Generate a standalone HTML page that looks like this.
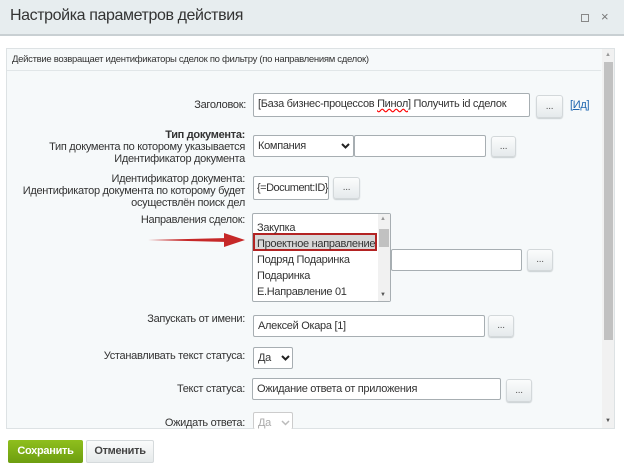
<!DOCTYPE html><html><head><meta charset="utf-8"><style>
body{margin:0;width:624px;height:470px;background:#fff;font-family:"Liberation Sans",sans-serif;position:relative;overflow:hidden;color:#333;letter-spacing:-0.3px}
.a{position:absolute}
.l{position:absolute;font-size:11px;text-align:right;line-height:12px;color:#333}
.in{position:absolute;background:#fff;border:1px solid #a7aeb2;border-radius:2px;font-size:11px;line-height:20px;padding-left:4px;box-sizing:border-box;color:#333;white-space:nowrap;overflow:hidden}
.b{position:absolute;background:linear-gradient(#fbfcfc,#e5eaec);border:1px solid #d3d8da;border-radius:3px;box-sizing:border-box;font-size:10px;text-align:center;line-height:16px;color:#555;box-shadow:0 1px 1px #c9cfd1}
.ch{position:absolute;top:7px}
</style></head><body>
<div class="a" style="left:0;top:0;width:624px;height:34px;background:#e7edef;border-bottom:2px solid #c9d0d3"></div>
<div class="a" style="left:10px;top:7px;font-size:16px;color:#333;letter-spacing:-0.4px">Настройка параметров действия</div>
<div class="a" style="left:581px;top:14px;width:6px;height:6px;border:1px solid #888"></div>
<div class="a" style="left:601px;top:9px;font-size:13px;color:#777">×</div>
<div class="a" style="left:6px;top:48px;width:609px;height:381px;border:1px solid #dde2e4;background:#f6f9fa;box-sizing:border-box"></div>
<div class="a" style="left:7px;top:49px;width:594px;height:21px;border-bottom:1px solid #e1e6e8;background:#f6f9fa"></div>
<div class="a" style="left:12px;top:54px;font-size:9.5px;color:#333">Действие возвращает идентификаторы сделок по фильтру (по направлениям сделок)</div>
<div class="a" style="left:602px;top:49px;width:12px;height:379px;background:#f1f1f1"></div>
<div class="a" style="left:604px;top:62px;width:9px;height:278px;background:#c1c1c1"></div>
<div class="a" style="left:605px;top:52px;font-size:6px;color:#999">▲</div>
<div class="a" style="left:605px;top:418px;font-size:6px;color:#555">▼</div>

<div class="l" style="right:378px;top:99px">Заголовок:</div>
<div class="in" style="left:253px;top:93px;width:277px;height:24px">[База бизнес-процессов <span style="text-decoration:underline wavy red">Пинол</span>] Получить id сделок</div>
<div class="b" style="left:536px;top:95px;width:27px;height:23px;line-height:21px">...</div>
<div class="a" style="left:570px;top:99px;font-size:11px;color:#2067b0">[<u>Ид</u>]</div>

<div class="l" style="right:379px;top:129px"><b>Тип документа:</b><br>Тип документа по которому указывается<br>Идентификатор документа</div>
<div class="in" style="left:253px;top:135px;width:101px;height:22px;line-height:20px">Компания<svg class="ch" style="left:87px" width="9" height="6"><path d="M1 1 L4.5 4.5 L8 1" stroke="#222" stroke-width="2" fill="none"/></svg></div>
<div class="in" style="left:354px;top:135px;width:132px;height:22px"></div>
<div class="b" style="left:491px;top:136px;width:25px;height:21px;line-height:19px">...</div>

<div class="l" style="right:379px;top:173px">Идентификатор документа:<br>Идентификатор документа по которому будет<br>осуществлён поиск дел</div>
<div class="in" style="left:253px;top:176px;width:76px;height:24px;line-height:22px;padding-left:3px;letter-spacing:-0.5px">{=Document:ID}</div>
<div class="b" style="left:333px;top:177px;width:27px;height:22px;line-height:20px">...</div>

<div class="l" style="right:379px;top:214px">Направления сделок:</div>
<div class="a" style="left:252px;top:213px;width:139px;height:89px;background:#fff;border:1px solid #a7aeb2;border-radius:2px;box-sizing:border-box"></div>
<div class="a" style="left:378px;top:214px;width:12px;height:87px;background:#f1f1f1"></div>
<div class="a" style="left:379px;top:229px;width:10px;height:18px;background:#c1c1c1"></div>
<div class="a" style="left:380px;top:216px;font-size:6px;color:#999">▲</div>
<div class="a" style="left:380px;top:292px;font-size:6px;color:#555">▼</div>
<div class="a" style="left:253px;top:233px;width:124px;height:18px;background:#d8d8d8;border:2px solid #b32323;box-sizing:border-box"></div>
<div class="a" style="left:257px;top:220px;font-size:11px;line-height:16px;color:#333">Закупка<br>Проектное направление<br>Подряд Подаринка<br>Подаринка<br>Е.Направление 01</div>
<svg class="a" style="left:148px;top:232px" width="98" height="16"><path d="M0 8 L80 6 L80 10 Z" fill="#c62828"/><path d="M76 1 L97 8 L76 15 Z" fill="#c62828"/></svg>
<div class="in" style="left:391px;top:249px;width:131px;height:22px"></div>
<div class="b" style="left:527px;top:249px;width:26px;height:22px;line-height:20px">...</div>

<div class="l" style="right:379px;top:313px">Запускать от имени:</div>
<div class="in" style="left:253px;top:315px;width:232px;height:22px">Алексей Окара [1]</div>
<div class="b" style="left:488px;top:315px;width:26px;height:22px;line-height:20px">...</div>

<div class="l" style="right:379px;top:350px">Устанавливать текст статуса:</div>
<div class="in" style="left:253px;top:347px;width:40px;height:22px">Да<svg class="ch" style="left:27px" width="9" height="6"><path d="M1 1 L4.5 4.5 L8 1" stroke="#222" stroke-width="2" fill="none"/></svg></div>

<div class="l" style="right:379px;top:383px">Текст статуса:</div>
<div class="in" style="left:252px;top:378px;width:249px;height:22px">Ожидание ответа от приложения</div>
<div class="b" style="left:506px;top:379px;width:26px;height:23px;line-height:21px">...</div>

<div class="l" style="right:379px;top:417px">Ожидать ответа:</div>
<div class="in" style="left:253px;top:412px;width:40px;height:17px;color:#aaa;border-color:#ccc;border-bottom:none">Да<svg class="ch" style="left:27px" width="9" height="6"><path d="M1 1 L4.5 4.5 L8 1" stroke="#bbb" stroke-width="1.5" fill="none"/></svg></div>

<div class="a" style="left:8px;top:440px;width:75px;height:23px;background:linear-gradient(#8fbf1d,#6d9e10);border-radius:2px;color:#fff;font-weight:bold;font-size:11px;text-align:center;line-height:23px">Сохранить</div>
<div class="a" style="left:86px;top:440px;width:68px;height:23px;background:linear-gradient(#fafbfb,#e6eaeb);border:1px solid #d5dadc;box-sizing:border-box;border-radius:2px;color:#444;font-weight:bold;font-size:11px;text-align:center;line-height:21px">Отменить</div>
</body></html>
